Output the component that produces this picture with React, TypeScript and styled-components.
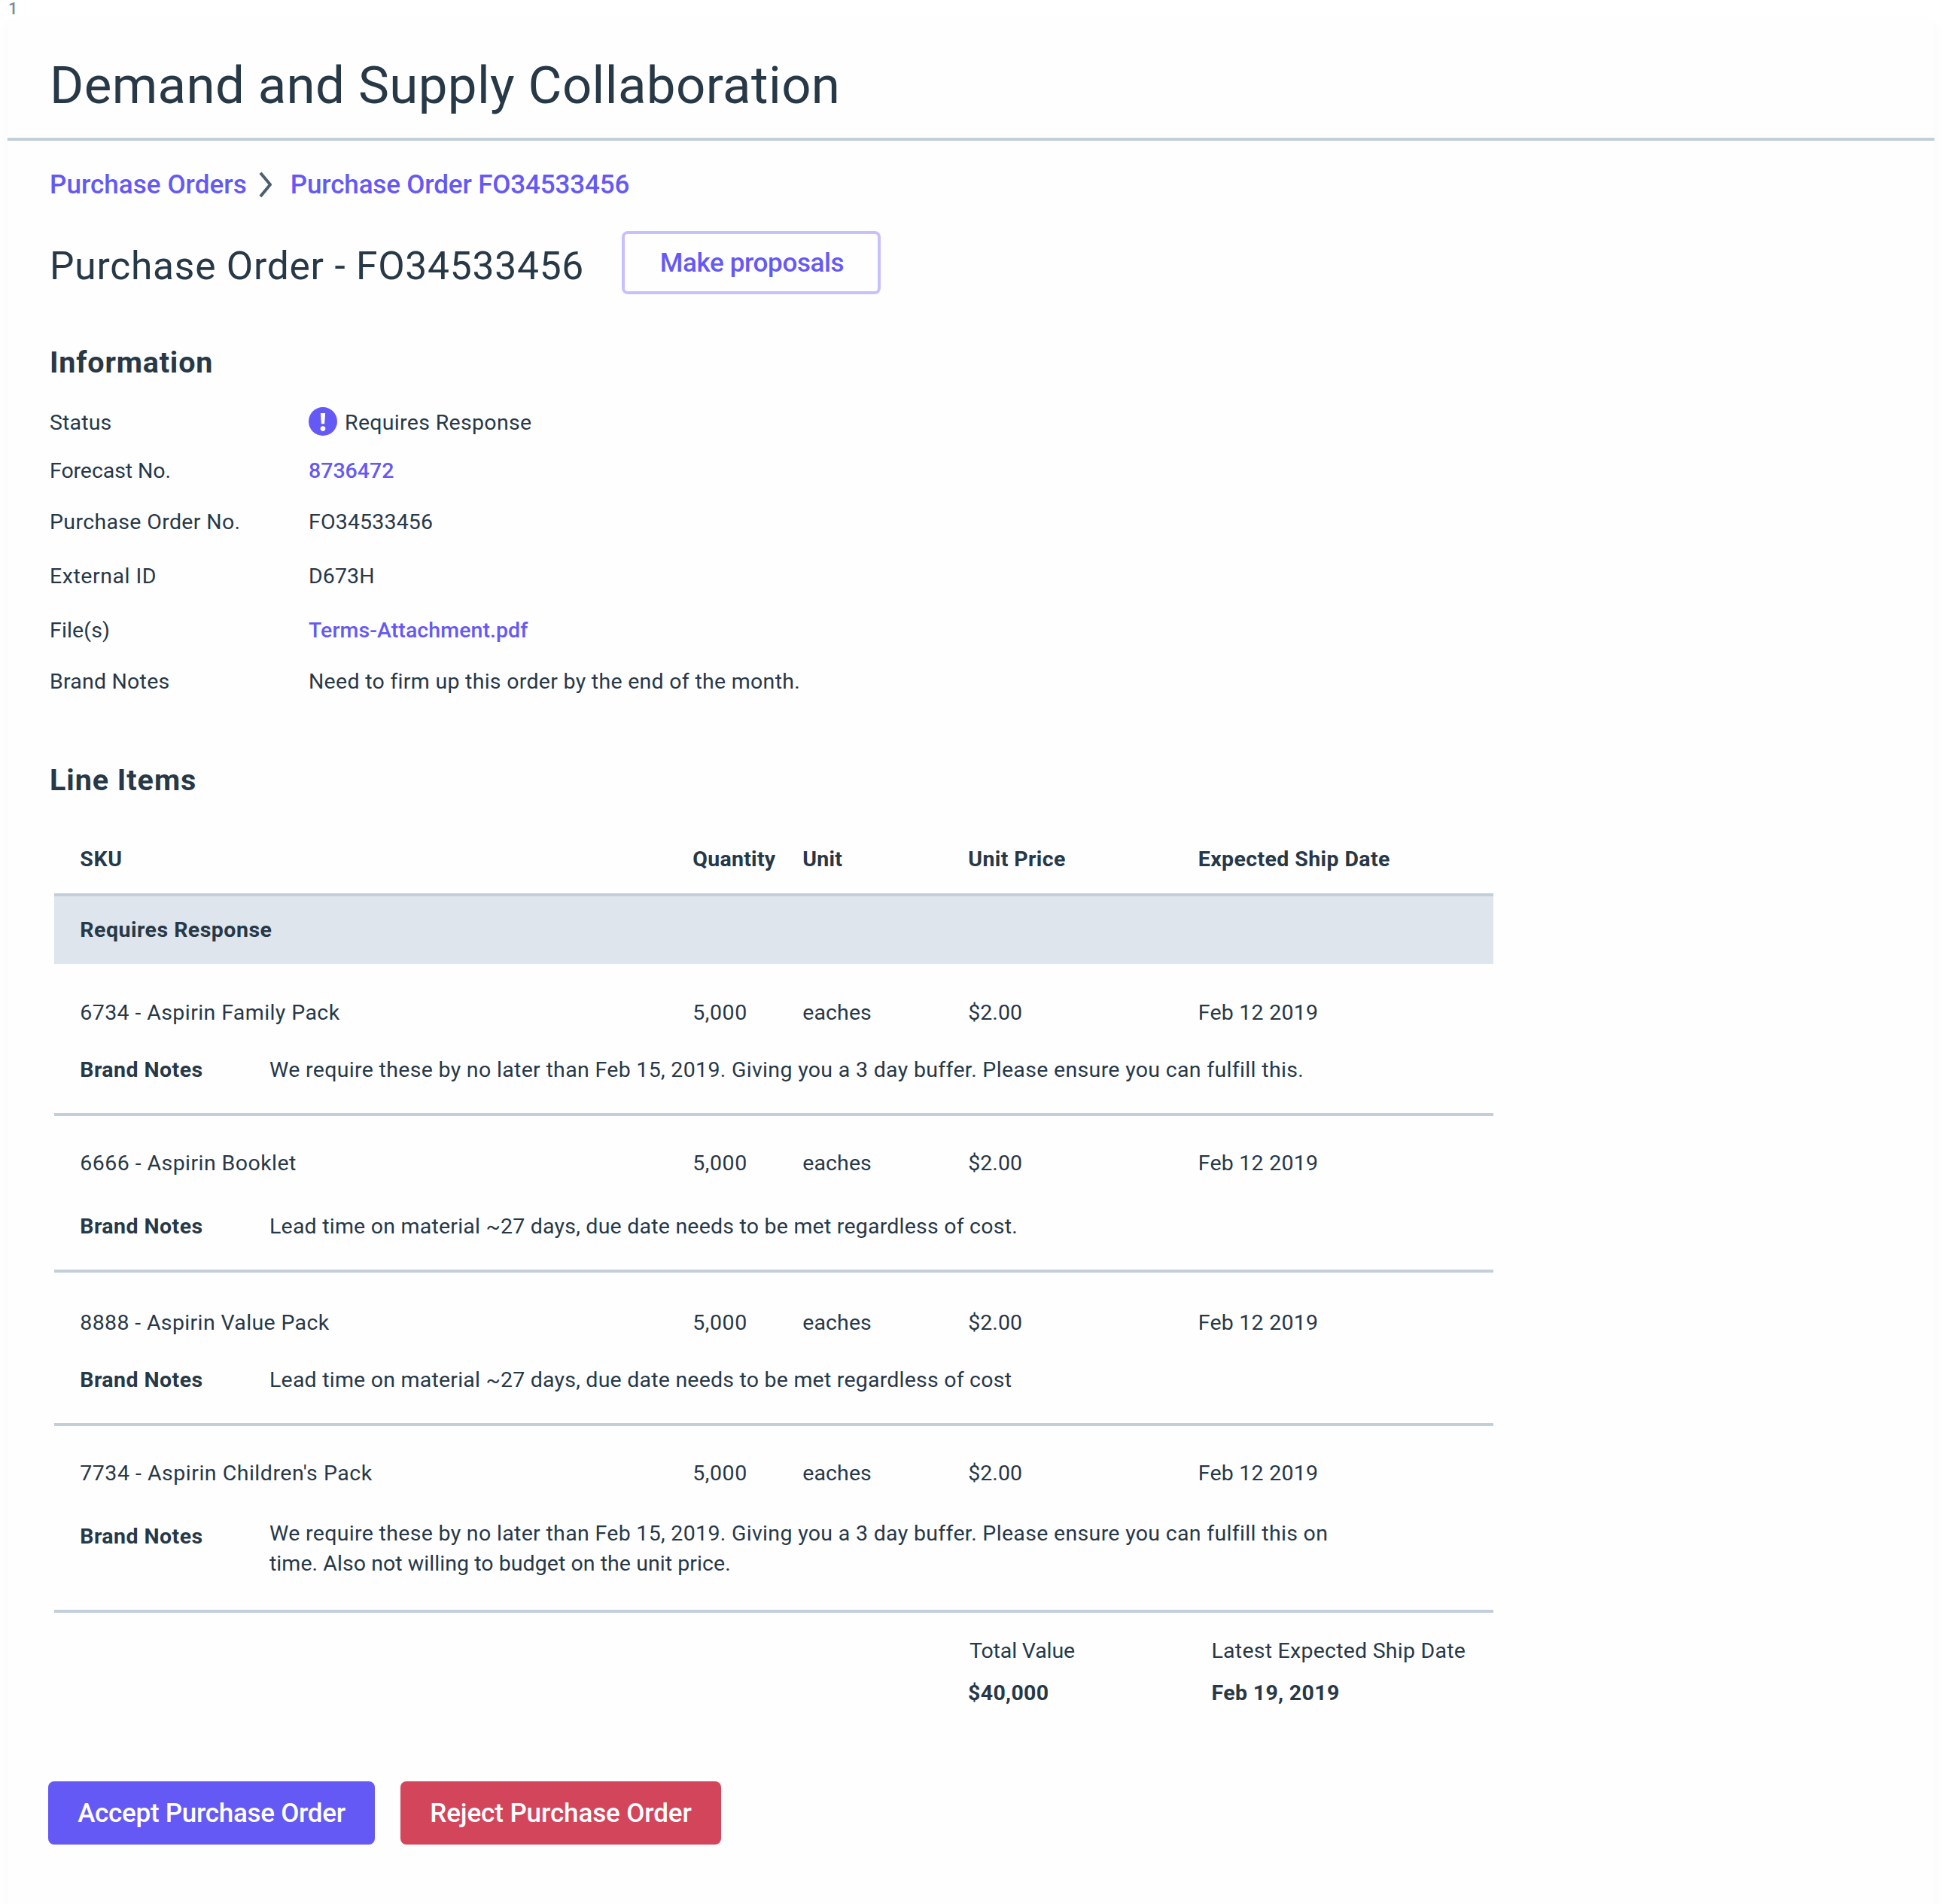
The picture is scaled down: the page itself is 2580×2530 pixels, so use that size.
import React from "react";
import styled, { createGlobalStyle } from "styled-components";

const color = {
  ink: "#273847",
  slate: "#4b5f70",
  muted: "#778a99",
  rule: "#c3ceda",
  ruleHeader: "#c2ced8",
  band: "#dfe5ec",
  accent: "#6559f5",
  accentSoft: "#c7c1fb",
  danger: "#d3455b",
};

const GlobalStyle = createGlobalStyle`
  *, *::before, *::after { box-sizing: border-box; }
  html, body { margin: 0; padding: 0; background: #fff; }
  body {
    font-family: Roboto, "Open Sans", sans-serif;
    font-size: 28.5px;
    line-height: 40px;
    color: ${color.ink};
    font-variant-ligatures: none;
  }
  h1, h2, h3, p, dl, dt, dd { margin: 0; font-weight: inherit; font-size: inherit; }
`;

const Page = styled.div`
  height: 2530px;
  padding: 0 10px;
  overflow: hidden;
`;

const PageIndex = styled.div`
  height: 24px;
  padding-left: 1px;
  font-size: 22px;
  font-weight: 500;
  line-height: 24px;
  color: ${color.muted};
`;

const Card = styled.main`
  min-height: 2560px;
  background: #fefefe;
  box-shadow: 0 8px 16px rgba(0, 0, 0, 0.035);
`;

const Header = styled.header`
  height: 163px;
  padding: 50px 56px 0;
  border-bottom: 4px solid ${color.ruleHeader};
`;

const AppTitle = styled.h1`
  && {
    font-size: 69px;
    line-height: 80px;
    letter-spacing: 0.38px;
  }
`;

const Content = styled.div`
  padding: 38px 56px 0;
`;

const Breadcrumb = styled.nav`
  display: flex;
  align-items: center;
  height: 40px;
`;

const Crumb = styled.a<{ $track: number }>`
  padding-top: 2px;
  font-size: 35px;
  font-weight: 500;
  color: ${color.accent};
  letter-spacing: ${(p) => p.$track}px;
`;

const Chevron = styled.svg`
  width: 20px;
  height: 36px;
  margin: 0 23px 0 15px;
`;

const TitleRow = styled.div`
  display: flex;
  align-items: flex-start;
  margin-top: 42px;
`;

const OrderTitle = styled.h2`
  && {
    width: 760px;
    margin-top: 17px;
    font-size: 51.5px;
    line-height: 60px;
    letter-spacing: 0.77px;
  }
`;

const Button = styled.button<{ $width: number; $track: number; $tone?: "danger" | "outline" }>`
  display: flex;
  align-items: center;
  justify-content: center;
  width: ${(p) => p.$width}px;
  height: 84px;
  padding: 2px 0 0 ${(p) => (p.$tone === "outline" ? 2 : 0)}px;
  border: 4px solid ${(p) => (p.$tone === "outline" ? color.accentSoft : "transparent")};
  border-radius: 8px;
  background: ${(p) =>
    p.$tone === "outline" ? "transparent" : p.$tone === "danger" ? color.danger : color.accent};
  color: ${(p) => (p.$tone === "outline" ? color.accent : "#fff")};
  font: 500 35px/40px Roboto, "Open Sans", sans-serif;
  letter-spacing: ${(p) => p.$track}px;
`;

const SectionTitle = styled.h3<{ $top: number; $track: number }>`
  && {
    margin-top: ${(p) => p.$top}px;
    font-size: 39.5px;
    font-weight: 700;
    line-height: 48px;
    letter-spacing: ${(p) => p.$track}px;
  }
`;

const Details = styled.dl`
  && {
    margin-top: 36px;
  }
`;

const DetailRow = styled.div<{ $height: number }>`
  display: grid;
  grid-template-columns: 344px auto;
  height: ${(p) => p.$height}px;
`;

const Term = styled.dt<{ $track: number }>`
  letter-spacing: ${(p) => p.$track}px;
`;

const Value = styled.dd<{ $track: number; $link?: boolean }>`
  display: flex;
  align-items: flex-start;
  letter-spacing: ${(p) => p.$track}px;
  color: ${(p) => (p.$link ? color.accent : "inherit")};
  font-weight: ${(p) => (p.$link ? 500 : 400)};
`;

const AlertIcon = styled.svg`
  width: 38px;
  height: 38px;
  margin: -1px 10px 0 0;
`;

const Table = styled.section`
  width: 1912px;
  margin-left: 6px;
`;

const Columns = styled.div`
  display: grid;
  grid-template-columns: 814px 146px 220px 305.5px 1fr;
  padding-left: 34.3px;
`;

const TableHead = styled(Columns)`
  height: 126px;
  padding-top: 61px;
  font-weight: 700;
`;

const Cell = styled.span<{ $track: number }>`
  letter-spacing: ${(p) => p.$track}px;
`;

const GroupBand = styled.div`
  height: 94px;
  padding: 25px 0 0 34.3px;
  border-top: 4px solid ${color.rule};
  background: ${color.band};
  font-weight: 700;
  letter-spacing: 0.48px;
`;

const LineItem = styled.article<{ $height: number; $top: number }>`
  height: ${(p) => p.$height}px;
  padding-top: ${(p) => p.$top}px;
  border-bottom: 4px solid ${color.rule};
`;

const Notes = styled.div<{ $gap: number }>`
  display: grid;
  grid-template-columns: 251.7px 1450px;
  margin-top: ${(p) => p.$gap}px;
  padding-left: 34.3px;
`;

const NotesLabel = styled.span<{ $drop: number }>`
  padding-top: ${(p) => p.$drop}px;
  font-weight: 700;
  letter-spacing: 0.45px;
`;

const NotesLine = styled.span<{ $track: number }>`
  display: block;
  white-space: nowrap;
  letter-spacing: ${(p) => p.$track}px;
`;

const Summary = styled.div`
  display: grid;
  grid-template-columns: 323.5px auto;
  row-gap: 16px;
  padding: 31px 0 0 1214px;
`;

const SummaryLabel = styled.span<{ $inset?: number; $track: number }>`
  padding-left: ${(p) => p.$inset ?? 0}px;
  letter-spacing: ${(p) => p.$track}px;
`;

const SummaryValue = styled.strong`
  font-weight: 700;
  letter-spacing: 0.34px;
`;

const Actions = styled.div`
  display: flex;
  gap: 34px;
  margin: 97px 0 0 -2px;
`;

type Detail = {
  term: string;
  termTrack: number;
  value: string;
  track: number;
  height: number;
  link?: boolean;
  alert?: boolean;
};

const details: Detail[] = [
  { term: "Status", termTrack: 0.15, value: "Requires Response", track: 0.32, height: 64, alert: true },
  { term: "Forecast No.", termTrack: -0.08, value: "8736472", track: 0.01, height: 68, link: true },
  { term: "Purchase Order No.", termTrack: 0.35, value: "FO34533456", track: 0.17, height: 72 },
  { term: "External ID", termTrack: 0.54, value: "D673H", track: 0.12, height: 72 },
  { term: "File(s)", termTrack: 0.13, value: "Terms-Attachment.pdf", track: 0.08, height: 68, link: true },
  {
    term: "Brand Notes",
    termTrack: 0.22,
    value: "Need to firm up this order by the end of the month.",
    track: 0.29,
    height: 39,
  },
];

const headings = [
  { text: "SKU", track: 0.67 },
  { text: "Quantity", track: 0.26 },
  { text: "Unit", track: 0.23 },
  { text: "Unit Price", track: 0.39 },
  { text: "Expected Ship Date", track: 0.39 },
];

type Item = {
  sku: string;
  track: number;
  height: number;
  top: number;
  gap: number;
  drop?: number;
  notes: { text: string; track: number }[];
};

const items: Item[] = [
  {
    sku: "6734 - Aspirin Family Pack",
    track: 0.41,
    height: 202,
    top: 45,
    gap: 36,
    notes: [
      {
        text: "We require these by no later than Feb 15, 2019. Giving you a 3 day buffer. Please ensure you can fulfill this.",
        track: 0.325,
      },
    ],
  },
  {
    sku: "6666 - Aspirin Booklet",
    track: 0.44,
    height: 208,
    top: 43,
    gap: 44,
    notes: [
      { text: "Lead time on material ~27 days, due date needs to be met regardless of cost.", track: 0.22 },
    ],
  },
  {
    sku: "8888 - Aspirin Value Pack",
    track: 0.36,
    height: 204,
    top: 47,
    gap: 36,
    notes: [
      { text: "Lead time on material ~27 days, due date needs to be met regardless of cost", track: 0.22 },
    ],
  },
  {
    sku: "7734 - Aspirin Children's Pack",
    track: 0.51,
    height: 248,
    top: 43,
    gap: 40,
    drop: 4,
    notes: [
      {
        text: "We require these by no later than Feb 15, 2019. Giving you a 3 day buffer. Please ensure you can fulfill this on",
        track: 0.325,
      },
      { text: "time. Also not willing to budget on the unit price.", track: 0.06 },
    ],
  },
];

export default function App() {
  return (
    <>
      <GlobalStyle />
      <Page>
        <PageIndex>1</PageIndex>
        <Card>
          <Header>
            <AppTitle>Demand and Supply Collaboration</AppTitle>
          </Header>
          <Content>
            <Breadcrumb>
              <Crumb $track={0.06}>Purchase Orders</Crumb>
              <Chevron viewBox="0 0 20 36" fill="none" stroke={color.slate} strokeWidth="4">
                <path d="M3 2.8 L16 18.2 L3 34" strokeLinejoin="round" />
              </Chevron>
              <Crumb $track={-0.15}>Purchase Order FO34533456</Crumb>
            </Breadcrumb>

            <TitleRow>
              <OrderTitle>Purchase Order - FO34533456</OrderTitle>
              <Button $tone="outline" $width={344} $track={-0.37}>
                Make proposals
              </Button>
            </TitleRow>

            <SectionTitle $top={67} $track={0.82}>
              Information
            </SectionTitle>
            <Details>
              {details.map((d) => (
                <DetailRow key={d.term} $height={d.height}>
                  <Term $track={d.termTrack}>{d.term}</Term>
                  <Value $track={d.track} $link={d.link}>
                    {d.alert && (
                      <AlertIcon viewBox="0 0 38 38">
                        <circle cx="19" cy="19" r="19" fill={color.accent} />
                        <path d="M15.9 8h6.2l-1 14.2h-4.2z" fill="#fff" />
                        <circle cx="19" cy="28.6" r="3.3" fill="#fff" />
                      </AlertIcon>
                    )}
                    {d.value}
                  </Value>
                </DetailRow>
              ))}
            </Details>

            <SectionTitle $top={88} $track={0.94}>
              Line Items
            </SectionTitle>
            <Table>
              <TableHead>
                {headings.map((h) => (
                  <Cell key={h.text} $track={h.track}>
                    {h.text}
                  </Cell>
                ))}
              </TableHead>
              <GroupBand>Requires Response</GroupBand>
              {items.map((item) => (
                <LineItem key={item.sku} $height={item.height} $top={item.top}>
                  <Columns>
                    <Cell $track={item.track}>{item.sku}</Cell>
                    <Cell $track={0.55}>5,000</Cell>
                    <Cell $track={0.09}>eaches</Cell>
                    <Cell $track={0.02}>$2.00</Cell>
                    <Cell $track={0.23}>Feb 12 2019</Cell>
                  </Columns>
                  <Notes $gap={item.gap}>
                    <NotesLabel $drop={item.drop ?? 0}>Brand Notes</NotesLabel>
                    <p>
                      {item.notes.map((n) => (
                        <NotesLine key={n.text} $track={n.track}>
                          {n.text}
                        </NotesLine>
                      ))}
                    </p>
                  </Notes>
                </LineItem>
              ))}
              <Summary>
                <SummaryLabel $inset={2} $track={-0.14}>
                  Total Value
                </SummaryLabel>
                <SummaryLabel $track={0.24}>Latest Expected Ship Date</SummaryLabel>
                <SummaryValue>$40,000</SummaryValue>
                <SummaryValue>Feb 19, 2019</SummaryValue>
              </Summary>
            </Table>

            <Actions>
              <Button $width={434} $track={-0.27}>
                Accept Purchase Order
              </Button>
              <Button $tone="danger" $width={426} $track={-0.11}>
                Reject Purchase Order
              </Button>
            </Actions>
          </Content>
        </Card>
      </Page>
    </>
  );
}
